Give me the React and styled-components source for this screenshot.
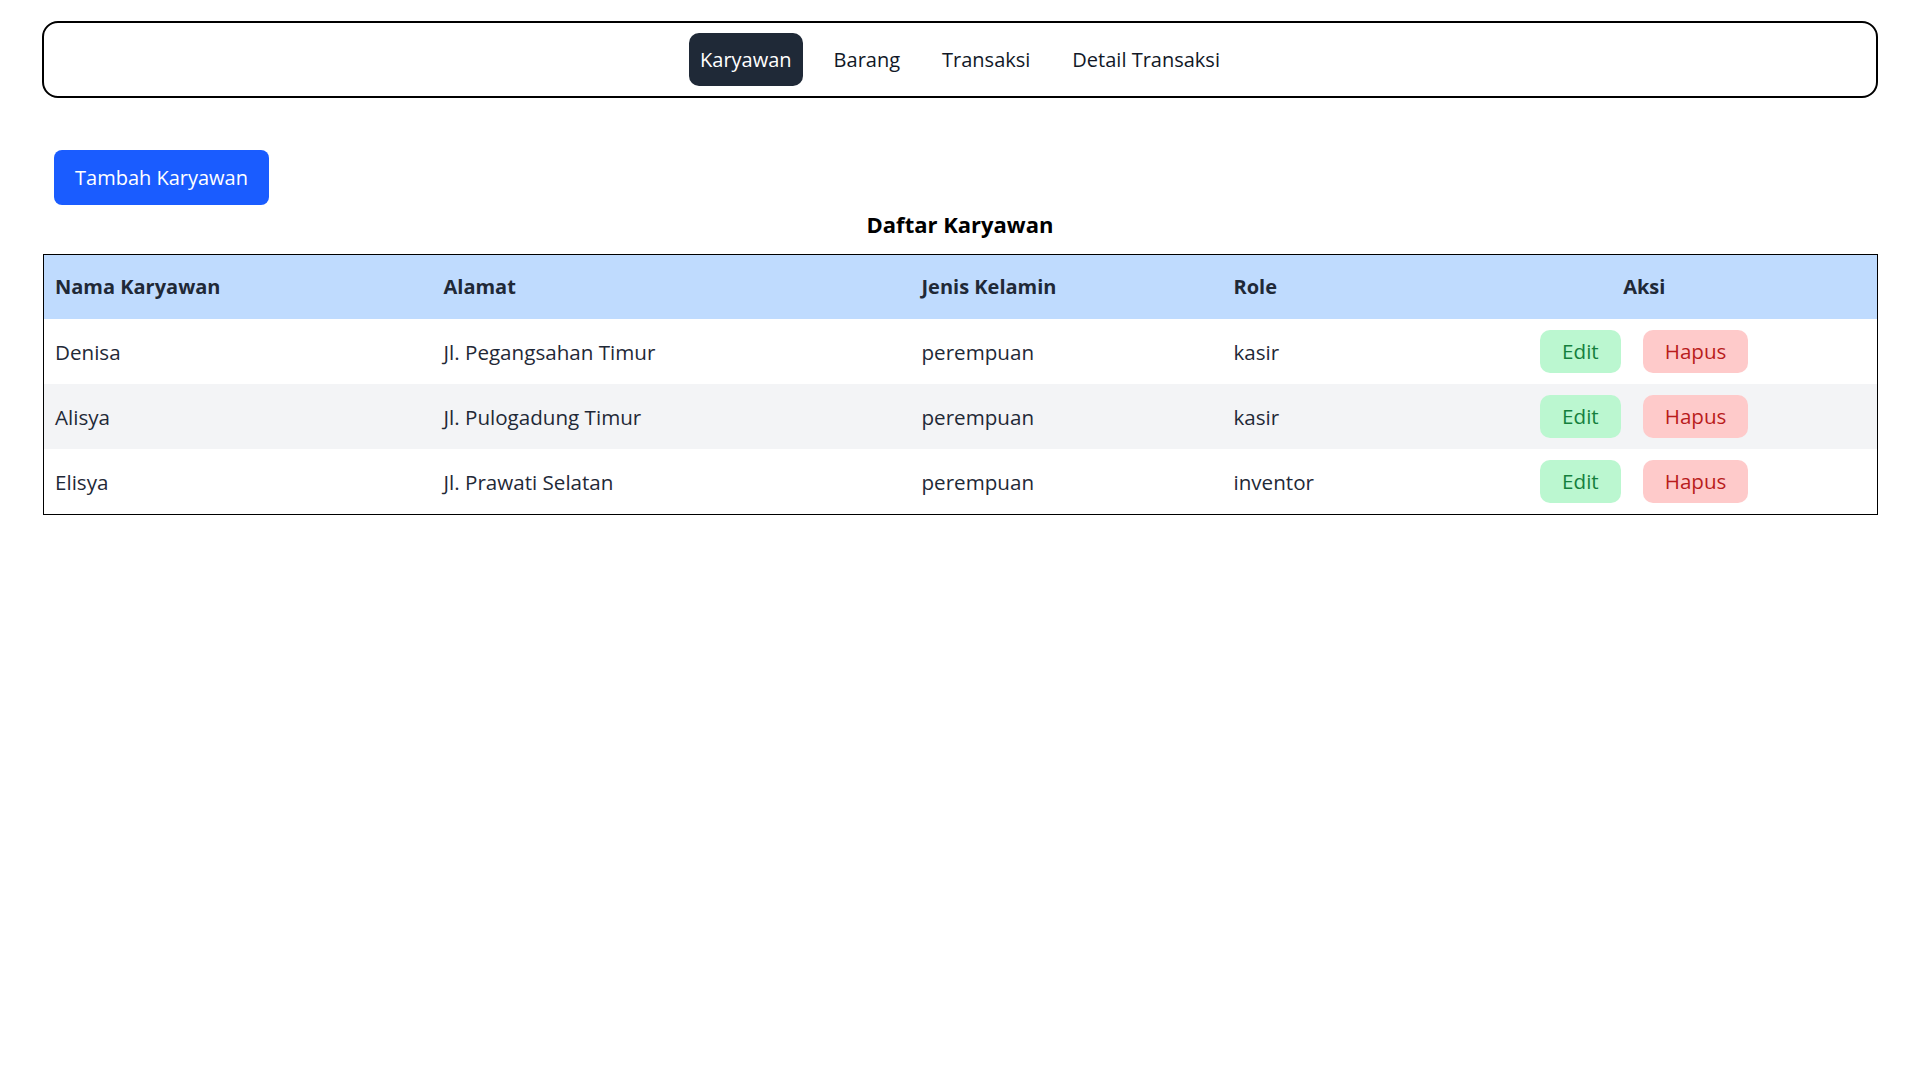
import React from "react";
import styled, { createGlobalStyle } from "styled-components";

const Global = createGlobalStyle`
  html, body { margin: 0; padding: 0; background: #ffffff; }
  body { font-family: "Open Sans", "Noto Sans", sans-serif; color: #1f2937; }
  * { box-sizing: border-box; }
`;

const Page = styled.div`
  padding: 21px 41px 40px 42px;
`;

const NavBar = styled.nav`
  border: 2px solid #000;
  border-radius: 16px;
  padding: 10px;
  display: flex;
  justify-content: center;
  gap: 20px;
`;

const NavItem = styled.a`
  display: block;
  font-size: 20px;
  line-height: 29px;
  padding: 12px 11px;
  border-radius: 10px;
  color: ${(p) => (p.$active ? "#ffffff" : "#111827")};
  background: ${(p) => (p.$active ? "#1f2937" : "transparent")};
  text-decoration: none;
  cursor: pointer;
`;

const Content = styled.main`
  padding-top: 52px;
`;

const AddButton = styled.button`
  margin-left: 12px;
  font-family: inherit;
  font-size: 20px;
  line-height: 28px;
  padding: 14px 21px 13px;
  background: #1a5cff;
  color: #fff;
  border: none;
  border-radius: 8px;
  cursor: pointer;
`;

const Title = styled.h2`
  margin: 5px 0 16px;
  text-align: center;
  font-size: 22px;
  line-height: 28px;
  font-weight: 700;
  color: #000;
`;

const Table = styled.table`
  width: calc(100% - 1px);
  margin-left: 1px;
  border-collapse: collapse;
  border: 1px solid #000;
  font-size: 20.6px;
`;

const HeadRow = styled.tr`
  background: #bfdbfe;
`;

const Th = styled.th`
  text-align: ${(p) => (p.$center ? "center" : "left")};
  font-weight: 700;
  font-size: 20px;
  line-height: 28px;
  padding: 18px 11px 18px 11px;
  color: #1f2937;
  width: ${(p) => p.$w || "auto"};
`;

const Row = styled.tr`
  background: ${(p) => (p.$alt ? "#f3f4f6" : "#ffffff")};
`;

const Td = styled.td`
  padding: 11px 11px;
  line-height: 28px;
  vertical-align: middle;
  color: #1f2937;
  text-align: ${(p) => (p.$center ? "center" : "left")};
`;

const Actions = styled.div`
  display: flex;
  justify-content: center;
  gap: 22px;
`;

const ActionButton = styled.button`
  font-family: inherit;
  font-size: 20.6px;
  line-height: 28px;
  padding: 7px 22px 8px;
  border: none;
  border-radius: 10px;
  cursor: pointer;
  background: ${(p) => (p.$danger ? "#fecaca" : "#bbf7d0")};
  color: ${(p) => (p.$danger ? "#b91c1c" : "#15803d")};
`;

const navItems = ["Karyawan", "Barang", "Transaksi", "Detail Transaksi"];

const rows = [
  { nama: "Denisa", alamat: "Jl. Pegangsahan Timur", jk: "perempuan", role: "kasir" },
  { nama: "Alisya", alamat: "Jl. Pulogadung Timur", jk: "perempuan", role: "kasir" },
  { nama: "Elisya", alamat: "Jl. Prawati Selatan", jk: "perempuan", role: "inventor" },
];

export default function App() {
  return (
    <>
      <Global />
      <Page>
        <NavBar>
          {navItems.map((n, i) => (
            <NavItem key={n} $active={i === 0}>
              {n}
            </NavItem>
          ))}
        </NavBar>
        <Content>
          <AddButton>Tambah Karyawan</AddButton>
          <Title>Daftar Karyawan</Title>
          <Table>
            <thead>
              <HeadRow>
                <Th $w="389px">Nama Karyawan</Th>
                <Th $w="478px">Alamat</Th>
                <Th $w="312px">Jenis Kelamin</Th>
                <Th $w="189px">Role</Th>
                <Th $center>Aksi</Th>
              </HeadRow>
            </thead>
            <tbody>
              {rows.map((r, i) => (
                <Row key={r.nama} $alt={i % 2 === 1}>
                  <Td>{r.nama}</Td>
                  <Td>{r.alamat}</Td>
                  <Td>{r.jk}</Td>
                  <Td>{r.role}</Td>
                  <Td $center>
                    <Actions>
                      <ActionButton>Edit</ActionButton>
                      <ActionButton $danger>Hapus</ActionButton>
                    </Actions>
                  </Td>
                </Row>
              ))}
            </tbody>
          </Table>
        </Content>
      </Page>
    </>
  );
}
